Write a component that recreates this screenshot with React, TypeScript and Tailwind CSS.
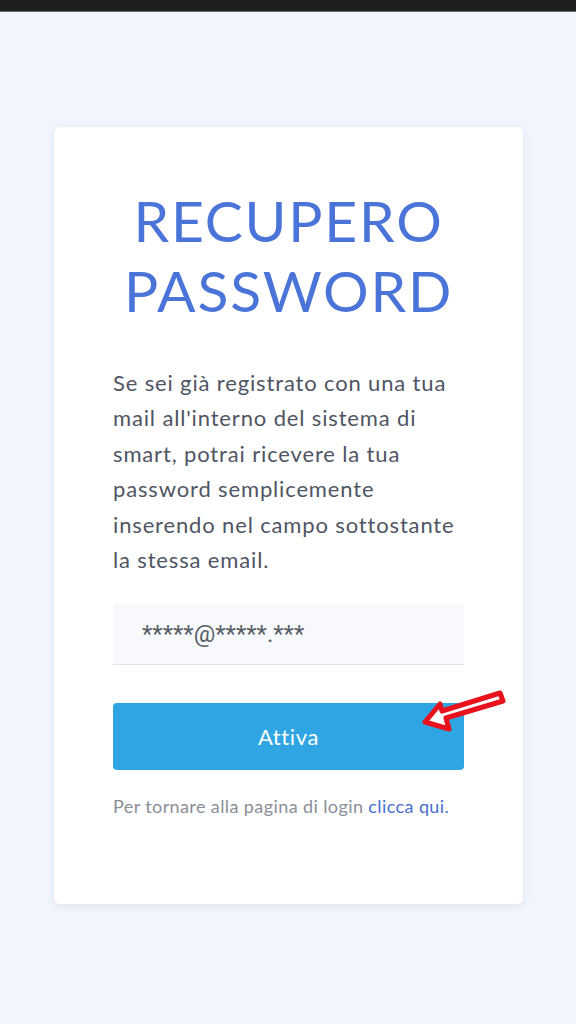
import React from "react";

function Arrow() {
  return (
    <svg className="absolute left-[410px] top-[680px]" width="110" height="60" viewBox="0 0 110 60">
      <path
        d="M15 42 L30 24 L32 31 L90 13 L93 21 L36 38 L39 49 Z"
        fill="#ffffff"
        stroke="#e8121c"
        strokeWidth="5"
        strokeLinejoin="round"
      />
    </svg>
  );
}

export default function App() {
  return (
    <div className="relative min-h-[1024px] w-[576px] bg-[#f0f5fe]" style={{ fontFamily: "Lato, 'Noto Sans', sans-serif" }}>
      <div className="h-[12px] bg-[#1f1f1f] border-b border-[#6b6b6b]" />
      <div className="pt-[115px] pl-[54px] pr-[53px]">
        <div className="bg-white rounded-[6px] shadow-[0_2px_8px_rgba(0,0,0,0.08)] pl-[59px] pr-[59px] pt-[58px] pb-[84px]">
          <h1 className="text-center text-[57px] leading-[70px] text-[#4b74d8] tracking-[1.8px]">
            RECUPERO
            <br />
            PASSWORD
          </h1>
          <p className="mt-[40px] text-[22px] leading-[35.4px] text-[#4f5563] tracking-[0.85px]">
            Se sei già registrato con una tua
            <br />
            mail all'interno del sistema di
            <br />
            smart, potrai ricevere la tua
            <br />
            password semplicemente
            <br />
            inserendo nel campo sottostante
            <br />
            la stessa email.
          </p>
          <div className="mt-[26px] h-[62px] bg-[#f7f9fc] border-b border-[#dfe3ea] flex items-center pl-[29px] text-[24px] text-[#585e66]" style={{ fontFamily: "Roboto, sans-serif" }}>
            *****@*****.***
          </div>
          <button className="mt-[38px] w-full h-[67px] rounded-[4px] bg-[#2fa5e4] text-white text-[22px] tracking-[0.6px]">
            Attiva
          </button>
          <p className="mt-[23px] text-[18px] text-[#8a8e96] tracking-[0.4px]">
            Per tornare alla pagina di login <span className="text-[#4a6fd1]">clicca qui.</span>
          </p>
        </div>
      </div>
      <Arrow />
    </div>
  );
}
